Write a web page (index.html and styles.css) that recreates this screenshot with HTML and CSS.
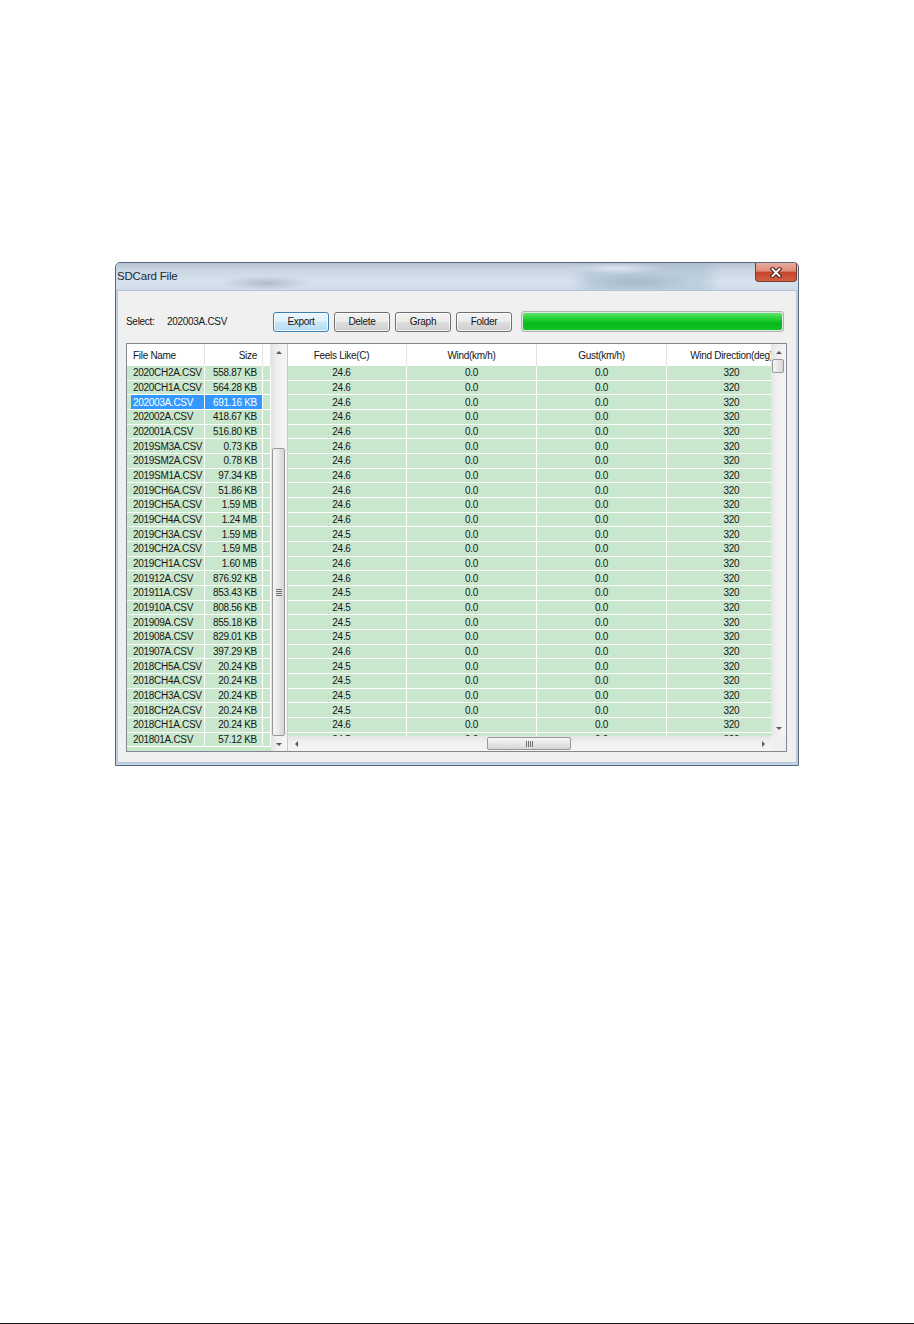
FILE: index.html
```html
<html>
<head>
<title>SDCard File</title>
<link rel="stylesheet" href="styles.css">
</head>
<body>

<div id="page">
<div class="window">

  <div class="titlebar">
    <span class="title">SDCard File</span>
    <span class="close"><svg width="12" height="11" viewBox="0 0 12 11"><path d="M2.5 2 L9.5 9 M9.5 2 L2.5 9" stroke="#4a1e17" stroke-width="4" stroke-linecap="square" fill="none"/><path d="M2.5 2 L9.5 9 M9.5 2 L2.5 9" stroke="#f4f4f4" stroke-width="2" stroke-linecap="square" fill="none"/></svg></span>
  </div>

  <div class="client">
    <div class="toolbar">
      <span class="label">Select:</span>
      <span class="selected">202003A.CSV</span>
      <span class="btn default">Export</span>
      <span class="btn">Delete</span>
      <span class="btn">Graph</span>
      <span class="btn last">Folder</span>
      <div class="progress"><div class="progress_fill"></div></div>
    </div>

    <div class="listframe">

      <!-- file list on the left -->
      <div class="files">
        <div class="filehead">
          <span class="hcell name">File Name</span>
          <span class="hcell size">Size</span>
          <span class="hcell pad"></span>
        </div>
        <div class="frow"><span class="name">2020CH2A.CSV</span><span class="size">558.87 KB</span><span></span></div>
        <div class="frow"><span class="name">2020CH1A.CSV</span><span class="size">564.28 KB</span><span></span></div>
        <div class="frow sel"><span class="name">202003A.CSV</span><span class="size">691.16 KB</span><span></span></div>
        <div class="frow"><span class="name">202002A.CSV</span><span class="size">418.67 KB</span><span></span></div>
        <div class="frow"><span class="name">202001A.CSV</span><span class="size">516.80 KB</span><span></span></div>
        <div class="frow"><span class="name">2019SM3A.CSV</span><span class="size">0.73 KB</span><span></span></div>
        <div class="frow"><span class="name">2019SM2A.CSV</span><span class="size">0.78 KB</span><span></span></div>
        <div class="frow"><span class="name">2019SM1A.CSV</span><span class="size">97.34 KB</span><span></span></div>
        <div class="frow"><span class="name">2019CH6A.CSV</span><span class="size">51.86 KB</span><span></span></div>
        <div class="frow"><span class="name">2019CH5A.CSV</span><span class="size">1.59 MB</span><span></span></div>
        <div class="frow"><span class="name">2019CH4A.CSV</span><span class="size">1.24 MB</span><span></span></div>
        <div class="frow"><span class="name">2019CH3A.CSV</span><span class="size">1.59 MB</span><span></span></div>
        <div class="frow"><span class="name">2019CH2A.CSV</span><span class="size">1.59 MB</span><span></span></div>
        <div class="frow"><span class="name">2019CH1A.CSV</span><span class="size">1.60 MB</span><span></span></div>
        <div class="frow"><span class="name">201912A.CSV</span><span class="size">876.92 KB</span><span></span></div>
        <div class="frow"><span class="name">201911A.CSV</span><span class="size">853.43 KB</span><span></span></div>
        <div class="frow"><span class="name">201910A.CSV</span><span class="size">808.56 KB</span><span></span></div>
        <div class="frow"><span class="name">201909A.CSV</span><span class="size">855.18 KB</span><span></span></div>
        <div class="frow"><span class="name">201908A.CSV</span><span class="size">829.01 KB</span><span></span></div>
        <div class="frow"><span class="name">201907A.CSV</span><span class="size">397.29 KB</span><span></span></div>
        <div class="frow"><span class="name">2018CH5A.CSV</span><span class="size">20.24 KB</span><span></span></div>
        <div class="frow"><span class="name">2018CH4A.CSV</span><span class="size">20.24 KB</span><span></span></div>
        <div class="frow"><span class="name">2018CH3A.CSV</span><span class="size">20.24 KB</span><span></span></div>
        <div class="frow"><span class="name">2018CH2A.CSV</span><span class="size">20.24 KB</span><span></span></div>
        <div class="frow"><span class="name">2018CH1A.CSV</span><span class="size">20.24 KB</span><span></span></div>
        <div class="frow"><span class="name">201801A.CSV</span><span class="size">57.12 KB</span><span></span></div>
      </div>

      <div class="vscroll">
        <span class="arrow up"></span>
        <div class="track"><div class="thumb files_thumb"><span class="grip"></span></div></div>
        <span class="arrow down"></span>
      </div>

      <!-- data grid on the right -->
      <div class="gridwrap">
        <div class="view">
          <div class="datahead">
            <span class="hcell">Feels Like(C)</span>
            <span class="hcell">Wind(km/h)</span>
            <span class="hcell">Gust(km/h)</span>
            <span class="hcell">Wind Direction(deg)</span>
          </div>
          <div class="drow"><span>24.6</span><span>0.0</span><span>0.0</span><span>320</span></div>
          <div class="drow"><span>24.6</span><span>0.0</span><span>0.0</span><span>320</span></div>
          <div class="drow"><span>24.6</span><span>0.0</span><span>0.0</span><span>320</span></div>
          <div class="drow"><span>24.6</span><span>0.0</span><span>0.0</span><span>320</span></div>
          <div class="drow"><span>24.6</span><span>0.0</span><span>0.0</span><span>320</span></div>
          <div class="drow"><span>24.6</span><span>0.0</span><span>0.0</span><span>320</span></div>
          <div class="drow"><span>24.6</span><span>0.0</span><span>0.0</span><span>320</span></div>
          <div class="drow"><span>24.6</span><span>0.0</span><span>0.0</span><span>320</span></div>
          <div class="drow"><span>24.6</span><span>0.0</span><span>0.0</span><span>320</span></div>
          <div class="drow"><span>24.6</span><span>0.0</span><span>0.0</span><span>320</span></div>
          <div class="drow"><span>24.6</span><span>0.0</span><span>0.0</span><span>320</span></div>
          <div class="drow"><span>24.5</span><span>0.0</span><span>0.0</span><span>320</span></div>
          <div class="drow"><span>24.6</span><span>0.0</span><span>0.0</span><span>320</span></div>
          <div class="drow"><span>24.6</span><span>0.0</span><span>0.0</span><span>320</span></div>
          <div class="drow"><span>24.6</span><span>0.0</span><span>0.0</span><span>320</span></div>
          <div class="drow"><span>24.5</span><span>0.0</span><span>0.0</span><span>320</span></div>
          <div class="drow"><span>24.5</span><span>0.0</span><span>0.0</span><span>320</span></div>
          <div class="drow"><span>24.5</span><span>0.0</span><span>0.0</span><span>320</span></div>
          <div class="drow"><span>24.5</span><span>0.0</span><span>0.0</span><span>320</span></div>
          <div class="drow"><span>24.6</span><span>0.0</span><span>0.0</span><span>320</span></div>
          <div class="drow"><span>24.5</span><span>0.0</span><span>0.0</span><span>320</span></div>
          <div class="drow"><span>24.5</span><span>0.0</span><span>0.0</span><span>320</span></div>
          <div class="drow"><span>24.5</span><span>0.0</span><span>0.0</span><span>320</span></div>
          <div class="drow"><span>24.5</span><span>0.0</span><span>0.0</span><span>320</span></div>
          <div class="drow"><span>24.6</span><span>0.0</span><span>0.0</span><span>320</span></div>
          <div class="drow"><span>24.5</span><span>0.0</span><span>0.0</span><span>320</span></div>
        </div>

        <div class="vscroll right">
          <span class="arrow up"></span>
          <div class="track"><div class="thumb grid_thumb"></div></div>
          <span class="arrow down"></span>
        </div>

        <div class="hscroll">
          <span class="arrow left"></span>
          <div class="htrack"><div class="hthumb"><span class="hgrip"></span></div></div>
          <span class="arrow rightarrow"></span>
        </div>
        <div class="corner"></div>
      </div>

    </div>
  </div>

</div>
</div> <!-- End of "page" -->

</body>
</html>
```

FILE: styles.css
```css
body {
  margin: 0;
  background: #fff;
  font-family: "Liberation Sans", Arial, sans-serif;
  font-size: 10px;
  letter-spacing: -0.3px;
  color: #161616;
}
div#page {
  box-sizing: border-box;
  height: 1324px;
  padding: 262px 0 0 115px;
  border-bottom: 1px solid #141414;
}

/* window frame */
div.window {
  box-sizing: border-box;
  width: 684px;
  height: 504px;
  border: 1px solid #55687d;
  border-radius: 5px 5px 0 0;
  background: #c3d4e6;
  display: flex;
  flex-direction: column;
}
div.titlebar {
  height: 27px;
  flex: none;
  display: flex;
  justify-content: space-between;
  align-items: flex-start;
  padding-left: 1px;
  border-radius: 4px 4px 0 0;
  background:
    radial-gradient(45px 7px at 150px 20px, rgba(140,150,162,.5), transparent),
    radial-gradient(60px 9px at 520px 19px, rgba(120,140,160,.35), transparent),
    radial-gradient(50px 6px at 500px 5px, rgba(240,245,250,.7), transparent),
    linear-gradient(to right, transparent 455px, rgba(150,175,200,.35) 475px, rgba(150,175,200,.35) 585px, transparent 605px),
    linear-gradient(#b7c4d1, #cbd7e3 30%, #d6e2ed 70%, #d0dde9);
}
span.title {
  font-size: 11.5px;
  letter-spacing: -0.2px;
  line-height: 27px;
  color: #1e2833;
}
span.close {
  box-sizing: border-box;
  width: 42px;
  height: 19px;
  margin-right: 1px;
  border: 1px solid #7b3a2f;
  border-top: 0;
  border-radius: 0 0 4px 4px;
  background: linear-gradient(#e8ad9e, #dc8a76 45%, #c6442c 52%, #d2603f);
  display: flex;
  align-items: center;
  justify-content: center;
}

div.client {
  flex: 1;
  box-sizing: border-box;
  margin: 0 1px 2px 1px;
  padding: 20px 0 0 8px;
  border: 1px solid #b5c4d3;
  background: #f0f0f0;
}

/* select line, buttons and progress */
div.toolbar {
  height: 21px;
  display: flex;
  align-items: center;
}
span.label {
  width: 41px;
}
span.selected {
  width: 106px;
}
span.btn {
  box-sizing: border-box;
  width: 56px;
  height: 20px;
  margin-right: 5px;
  border: 1px solid #707070;
  border-radius: 3px;
  background: linear-gradient(#f2f2f2, #ebebeb 50%, #dddddd 50%, #cfcfcf);
  box-shadow: inset 0 0 0 1px rgba(255,255,255,.7);
  display: flex;
  align-items: center;
  justify-content: center;
}
span.btn.default {
  border-color: #3c7fb1;
  background: linear-gradient(#eaf6fd, #dcf0fb 50%, #c9e6f7 50%, #b6dcf2);
}
span.btn.last {
  margin-right: 9px;
}
div.progress {
  box-sizing: border-box;
  width: 263px;
  height: 21px;
  padding: 1px;
  border: 1px solid #b3b3b3;
  border-radius: 3px;
  background: #e2e2e2;
}
div.progress_fill {
  height: 100%;
  border-radius: 2px;
  background: linear-gradient(#5fe36c, #22d232 35%, #06b81a 60%, #10c522);
}

/* list area */
div.listframe {
  box-sizing: border-box;
  width: 661px;
  height: 409px;
  margin-top: 11px;
  border: 1px solid #828790;
  background: #fff;
  display: flex;
}
div.files {
  width: 144px;
  flex: none;
  background: #c9e7cc;
  overflow: hidden;
}
div.filehead {
  height: 22px;
  display: grid;
  grid-template-columns: 78px 58px 8px;
  background: #fff;
}
span.hcell {
  box-sizing: border-box;
  border-right: 1px solid #e3e3e3;
  display: flex;
  align-items: center;
  justify-content: center;
  white-space: nowrap;
  overflow: hidden;
}
div.frow {
  box-sizing: border-box;
  height: 14.68px;
  display: grid;
  grid-template-columns: 78px 58px 8px;
  border-bottom: 1px solid #fff;
}
div.frow span {
  box-sizing: border-box;
  border-right: 1px solid #fff;
  display: flex;
  align-items: center;
  white-space: nowrap;
  overflow: hidden;
}
span.name, div.frow span.name {
  justify-content: flex-start;
  padding-left: 6px;
}
span.size, div.frow span.size {
  justify-content: flex-end;
  padding-right: 5px;
}
div.frow.sel span.name {
  margin-left: 4px;
  padding-left: 2px;
  background: #3399ff;
  color: #fff;
}
div.frow.sel span.size {
  background: #3399ff;
  color: #fff;
}

/* scroll bars */
div.vscroll {
  width: 16px;
  flex: none;
  display: flex;
  flex-direction: column;
  background: linear-gradient(to right, #e3e3e3, #efefef 35%, #f5f5f5);
}
div.vscroll.right {
  width: 15px;
}
span.arrow {
  flex: none;
  height: 16px;
  display: flex;
  align-items: center;
  justify-content: center;
}
span.arrow::before {
  content: "";
  border-left: 3px solid transparent;
  border-right: 3px solid transparent;
  border-bottom: 3px solid #5a5a5a;
}
span.arrow.down::before {
  border-bottom: 0;
  border-top: 3px solid #5a5a5a;
}
span.arrow.left, span.arrow.rightarrow {
  width: 16px;
  height: auto;
}
span.arrow.left::before {
  border: 3px solid transparent;
  border-left: 0;
  border-right: 3px solid #5a5a5a;
}
span.arrow.rightarrow::before {
  border: 3px solid transparent;
  border-right: 0;
  border-left: 3px solid #5a5a5a;
}
div.track {
  flex: 1;
}
div.thumb {
  box-sizing: border-box;
  width: 13px;
  margin-left: 1px;
  border: 1px solid #979797;
  border-radius: 2px;
  background: linear-gradient(to right, #f6f6f6, #e7e7e7 50%, #d6d6d6);
  display: flex;
  align-items: center;
  justify-content: center;
}
div.files_thumb {
  height: 288px;
  margin-top: 88px;
}
div.grid_thumb {
  width: 12px;
  height: 14px;
  margin-top: -1px;
}
span.grip {
  width: 6px;
  height: 7px;
  background: repeating-linear-gradient(#6f6f6f 0 1px, transparent 1px 2px);
}

div.gridwrap {
  border-left: 1px solid #c9c9c9;
  display: grid;
  grid-template-columns: 483px 15px;
  grid-template-rows: 392px 15px;
}
div.view {
  overflow: hidden;
  background: #c9e7cc;
}
div.datahead {
  width: 520px;
  height: 22px;
  margin-left: -11px;
  display: grid;
  grid-template-columns: repeat(4, 130px);
  background: #fff;
}
div.drow {
  box-sizing: border-box;
  width: 520px;
  height: 14.68px;
  margin-left: -11px;
  display: grid;
  grid-template-columns: repeat(4, 130px);
  border-bottom: 1px solid #fff;
}
div.drow span {
  box-sizing: border-box;
  border-right: 1px solid #fff;
  display: flex;
  align-items: center;
  justify-content: center;
}

div.hscroll {
  display: flex;
  background: linear-gradient(#e3e3e3, #efefef 35%, #f5f5f5);
}
div.htrack {
  flex: 1;
}
div.hthumb {
  box-sizing: border-box;
  width: 84px;
  height: 13px;
  margin: 1px 0 0 183px;
  border: 1px solid #979797;
  border-radius: 2px;
  background: linear-gradient(#f6f6f6, #e7e7e7 50%, #d6d6d6);
  display: flex;
  align-items: center;
  justify-content: center;
}
span.hgrip {
  width: 7px;
  height: 6px;
  background: repeating-linear-gradient(to right, #6f6f6f 0 1px, transparent 1px 2px);
}
div.corner {
  background: #f0f0f0;
}
```
